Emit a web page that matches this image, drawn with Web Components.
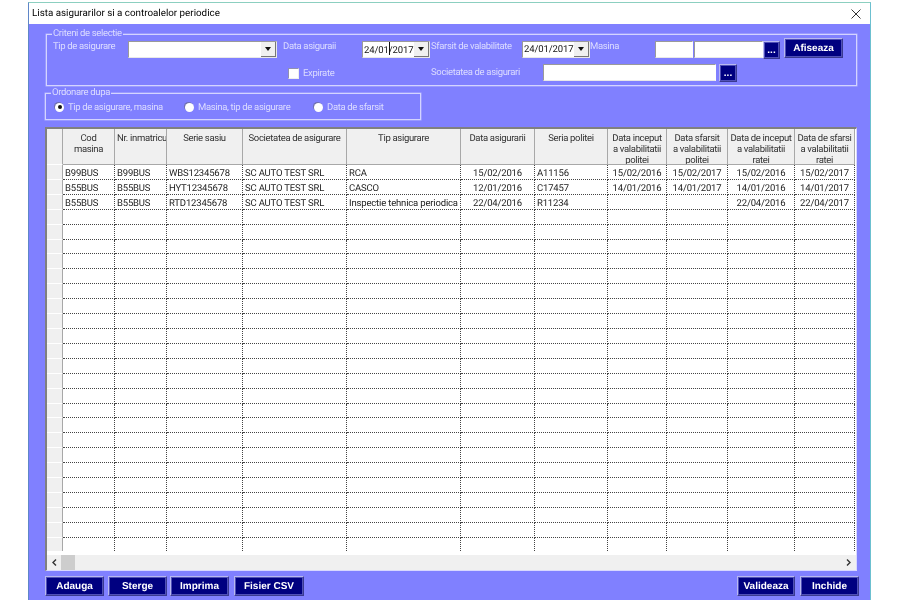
<!DOCTYPE html>
<html>
<head>
<meta charset="utf-8">
<title>Lista asigurarilor</title>
<style>
  html, body { margin: 0; height: 100%; background: #fff; overflow: hidden; }
  body { font: 9.5px Roboto, "Liberation Sans", sans-serif; text-rendering: geometricPrecision; }
</style>
</head>
<body>
<app-window caption="Lista asigurarilor si a controalelor periodice">
  <group-box caption="Criteni de selectie" style="margin-left:1px;width:811px;height:52px">
    <div style="display:flex;flex-direction:column;gap:5px">
      <form-row>
        <form-label width="75">Tip de asigurare</form-label>
        <combo-box width="149"></combo-box>
        <form-label width="79" style="margin-left:6px">Data asiguraii</form-label>
        <combo-box width="68" value="24/01/2017" caret></combo-box>
        <form-label width="91" style="margin-left:1px">Sfarsit de valabilitate</form-label>
        <combo-box width="68" value="24/01/2017"></combo-box>
        <form-label width="65">Masina</form-label>
        <text-box width="38"></text-box>
        <text-box width="69" style="margin-left:1px"></text-box>
        <dark-button width="17" height="18">...</dark-button>
        <dark-button width="59" height="20" style="margin:-3px 0 0 4px">Afiseaza</dark-button>
      </form-row>
      <form-row style="padding-left:235px">
        <check-box width="143">Expirate</check-box>
        <form-label width="112" style="margin-top:3px">Societatea de asigurari</form-label>
        <text-box width="173"></text-box>
        <dark-button width="18" height="18" style="margin-left:3px">...</dark-button>
      </form-row>
    </div>
  </group-box>
  <group-box caption="Ordonare dupa" style="width:376px;height:27px;margin-top:7px">
    <form-row style="padding:1px 0 0 3px">
      <radio-item width="130" checked>Tip de asigurare, masina</radio-item>
      <radio-item width="129">Masina, tip de asigurare</radio-item>
      <radio-item width="80">Data de sfarsit</radio-item>
    </form-row>
  </group-box>
  <data-grid></data-grid>
  <div style="display:flex;margin-top:5px;width:814px">
    <dark-button width="59" height="20">Adauga</dark-button>
    <dark-button width="59" height="20" style="margin-left:4px">Sterge</dark-button>
    <dark-button width="59" height="20" style="margin-left:3px">Imprima</dark-button>
    <dark-button width="70" height="20" style="margin-left:5px">Fisier CSV</dark-button>
    <dark-button width="58" height="20" style="margin-left:auto">Valideaza</dark-button>
    <dark-button width="59" height="20" style="margin-left:5px">Inchide</dark-button>
  </div>
</app-window>

<script>
// Small helper so every element gets an open shadow root with its own style
class Base extends HTMLElement {
  constructor() {
    super();
    this.attachShadow({ mode: 'open' });
  }
  size() {
    const w = this.getAttribute('width');
    const h = this.getAttribute('height');
    if (w) this.style.width = w + 'px';
    if (h) this.style.height = h + 'px';
  }
}

// Main dialog window
class AppWindow extends Base {
  connectedCallback() {
    const caption = this.getAttribute('caption') || '';
    this.shadowRoot.innerHTML = `
      <style>
        :host {
          display: flex;
          flex-direction: column;
          box-sizing: border-box;
          width: 843px;
          height: 598px;
          margin: 2px 0 0 28px;
          border: 1px solid #8ccfc0;
          border-left-color: #5f86c8;
          border-right-color: #6cc0d0;
          border-bottom: 0;
          background: #8080ff;
          filter: blur(.3px);
        }
        .title {
          flex: 0 0 21px;
          display: flex;
          align-items: center;
          justify-content: space-between;
          padding: 0 9px 0 3px;
          background: #fff;
          color: #000;
          font-size: 9.8px;
        }
        .body {
          flex: 1;
          padding: 10px 0 0 16px;
          color: #dcdcff;
          letter-spacing: -.34px;
        }
        svg { display: block; }
      </style>
      <div class="title">
        <span>${caption}</span>
        <svg width="10" height="10" viewBox="0 0 10 10"><path d="M.5 .5l9 9M9.5 .5l-9 9" stroke="#333" fill="none"/></svg>
      </div>
      <div class="body"><slot></slot></div>
    `;
  }
}

// Group frame with a caption sitting on its top line
class GroupBox extends Base {
  connectedCallback() {
    const caption = this.getAttribute('caption') || '';
    this.shadowRoot.innerHTML = `
      <style>
        :host {
          display: block;
          box-sizing: border-box;
          position: relative;
          border: 1px solid #d4d4ff;
          box-shadow: 0 0 0 .5px #b4b4ff;
          padding-top: 6px;
          padding-left: 6px;
        }
        .cap {
          position: absolute;
          left: 5px;
          top: -7px;
          padding: 0 1px;
          background: #8080ff;
          line-height: 12px;
        }
      </style>
      <span class="cap">${caption}</span>
      <slot></slot>
    `;
  }
}

class FormRow extends Base {
  connectedCallback() {
    this.shadowRoot.innerHTML = `
      <style>
        :host { display: flex; align-items: flex-start; }
      </style>
      <slot></slot>
    `;
  }
}

class FormLabel extends Base {
  connectedCallback() {
    this.size();
    this.shadowRoot.innerHTML = `
      <style>
        :host { display: block; flex: none; line-height: 12px; white-space: nowrap; }
      </style>
      <slot></slot>
    `;
  }
}

class TextBox extends Base {
  connectedCallback() {
    this.size();
    this.shadowRoot.innerHTML = `
      <style>
        :host {
          display: block;
          flex: none;
          box-sizing: border-box;
          height: 17px;
          background: #fff;
          border: 1px solid;
          border-color: #9a9a9a #fff #e8e8e8 #9a9a9a;
        }
      </style>
    `;
  }
}

class ComboBox extends Base {
  connectedCallback() {
    this.size();
    const value = this.getAttribute('value') || '';
    const text = this.hasAttribute('caret')
      ? value.slice(0, 5) + '<i></i>' + value.slice(5)
      : value;
    this.shadowRoot.innerHTML = `
      <style>
        :host {
          display: flex;
          flex: none;
          box-sizing: border-box;
          height: 17px;
          background: #fff;
          border: 1px solid;
          border-color: #9a9a9a #e8e8e8 #e8e8e8 #9a9a9a;
          color: #111;
          letter-spacing: -.1px;
        }
        .txt { flex: 1; padding-left: 1px; line-height: 15px; white-space: nowrap; overflow: hidden; }
        i { display: inline-block; width: 1px; height: 13px; margin: 0 -1px 0 0; background: #111; vertical-align: -2px; }
        .btn {
          flex: 0 0 14px;
          display: flex;
          align-items: center;
          justify-content: center;
          background: #f0f0f0;
          border-right: 1px solid #777;
          border-bottom: 1px solid #777;
        }
        .btn::after {
          content: "";
          border: 3.5px solid transparent;
          border-top: 4px solid #111;
          border-bottom: 0;
        }
      </style>
      <span class="txt">${text}</span>
      <span class="btn"></span>
    `;
  }
}

class DarkButton extends Base {
  connectedCallback() {
    this.size();
    this.shadowRoot.innerHTML = `
      <style>
        :host {
          display: flex;
          flex: none;
          align-items: center;
          justify-content: center;
          box-sizing: border-box;
          background: #000080;
          border: 1px solid;
          border-color: #b8b8f0 #3a3a90 #3a3a90 #b8b8f0;
          outline: 1px solid #5050b8;
          outline-offset: -2px;
          color: #fff;
          font: bold 10px "Liberation Sans", sans-serif;
          letter-spacing: 0;
        }
      </style>
      <slot></slot>
    `;
  }
}

class CheckBox extends Base {
  connectedCallback() {
    this.size();
    this.shadowRoot.innerHTML = `
      <style>
        :host { display: flex; flex: none; align-items: center; gap: 4px; height: 12px; margin-top: 3px; }
        b { width: 9px; height: 9px; background: #fff; border: 1px solid; border-color: #9090b0 #eee #eee #9090b0; }
      </style>
      <b></b><slot></slot>
    `;
  }
}

class RadioItem extends Base {
  connectedCallback() {
    this.size();
    const dot = this.hasAttribute('checked') ? '<u></u>' : '';
    this.shadowRoot.innerHTML = `
      <style>
        :host { display: flex; flex: none; align-items: center; gap: 4px; height: 12px; white-space: nowrap; }
        b {
          display: flex;
          flex: none;
          align-items: center;
          justify-content: center;
          width: 9px;
          height: 9px;
          border-radius: 50%;
          background: #fff;
          box-shadow: -1px -1px 0 #7070b0;
        }
        u { width: 4px; height: 4px; border-radius: 50%; background: #111; }
        span { padding-top: 1px; }
      </style>
      <b>${dot}</b><span><slot></slot></span>
    `;
  }
}

// Insurance list grid
const COLUMNS = [
  { w: 52, title: 'Cod<br>masina' },
  { w: 52, title: 'Nr. inmatricu', left: true },
  { w: 76, title: 'Serie sasiu' },
  { w: 104, title: 'Societatea de asigurare' },
  { w: 114, title: 'Tip asigurare' },
  { w: 74, title: 'Data asigurarii', center: true },
  { w: 73, title: 'Seria politei' },
  { w: 59, title: 'Data inceput<br>a valabilitatii<br>politei', center: true },
  { w: 61, title: 'Data sfarsit<br>a valabilitatii<br>politei', center: true },
  { w: 67, title: 'Data de inceput<br>a valabilitatii<br>ratei', center: true },
  { w: 60, title: 'Data de sfarsi<br>a valabilitatii<br>ratei', center: true },
];

const ROWS = [
  ['B99BUS', 'B99BUS', 'WBS12345678', 'SC AUTO TEST SRL', 'RCA', '15/02/2016', 'A11156', '15/02/2016', '15/02/2017', '15/02/2016', '15/02/2017'],
  ['B55BUS', 'B55BUS', 'HYT12345678', 'SC AUTO TEST SRL', 'CASCO', '12/01/2016', 'C17457', '14/01/2016', '14/01/2017', '14/01/2016', '14/01/2017'],
  ['B55BUS', 'B55BUS', 'RTD12345678', 'SC AUTO TEST SRL', 'Inspectie tehnica periodica', '22/04/2016', 'R11234', '', '', '22/04/2016', '22/04/2017'],
];

class DataGrid extends Base {
  connectedCallback() {
    const tracks = COLUMNS.map(c => c.w + 'px').join(' ');
    let cells = '<div class="hd ind"></div>';
    COLUMNS.forEach(c => {
      cells += `<div class="hd${c.left ? ' lft' : ''}">${c.title}</div>`;
    });
    for (let r = 0; r < 26; r++) {
      cells += '<div class="ind"></div>';
      COLUMNS.forEach((c, i) => {
        const val = ROWS[r] ? ROWS[r][i] : '';
        cells += `<div class="td${c.center ? ' ctr' : ''}">${val}</div>`;
      });
    }
    this.shadowRoot.innerHTML = `
      <style>
        :host {
          display: flex;
          flex-direction: column;
          box-sizing: border-box;
          width: 812px;
          height: 444px;
          margin-top: 7px;
          background: #fff;
          border: 1px solid #d8d8ff;
          border-top: 2px solid #808080;
          border-left: 2px solid #808080;
          overflow: hidden;
          color: #222;
        }
        .table {
          flex: 1;
          display: grid;
          grid-template-columns: 16px ${tracks};
          grid-template-rows: 36px repeat(26, 14.92px);
          overflow: hidden;
          min-height: 0;
        }
        .hd {
          box-sizing: border-box;
          background: #f0f0f0;
          border-right: 1px solid #a8a8a8;
          border-bottom: 1px solid #a8a8a8;
          text-align: center;
          padding-top: 4px;
          line-height: 11px;
          color: #333;
          letter-spacing: -.32px;
          overflow: hidden;
          white-space: nowrap;
        }
        .hd.lft { text-align: left; padding-left: 2px; }
        .ind {
          background: #f0f0f0;
          border-right: 1px solid #a8a8a8;
          border-bottom: 1px solid #fff;
        }
        .td {
          box-sizing: border-box;
          border-right: 1px dotted #444;
          border-bottom: 1px dotted #444;
          padding: 3px 0 0 2px;
          line-height: 11px;
          letter-spacing: -.17px;
          white-space: nowrap;
          overflow: hidden;
          color: #222;
        }
        .ctr { text-align: center; padding-left: 0; }
        .scroll {
          flex: 0 0 15px;
          margin-top: 4px;
          display: flex;
          align-items: center;
          justify-content: space-between;
          background: #f0f0f0;
          color: #333;
        }
        .thumb { width: 14px; height: 15px; background: #cdcdcd; margin: 0 auto 0 -1px; }
        svg { display: block; flex: none; margin: 0 5px; }
      </style>
      <div class="table">${cells}</div>
      <div class="scroll">
        <svg width="5" height="7" viewBox="0 0 5 7"><path d="M4 .5L1 3.5L4 6.5" stroke="#333" stroke-width="1.4" fill="none"/></svg>
        <span class="thumb"></span>
        <svg width="5" height="7" viewBox="0 0 5 7"><path d="M1 .5L4 3.5L1 6.5" stroke="#333" stroke-width="1.4" fill="none"/></svg>
      </div>
    `;
  }
}

customElements.define('app-window', AppWindow);
customElements.define('group-box', GroupBox);
customElements.define('form-row', FormRow);
customElements.define('form-label', FormLabel);
customElements.define('text-box', TextBox);
customElements.define('combo-box', ComboBox);
customElements.define('dark-button', DarkButton);
customElements.define('check-box', CheckBox);
customElements.define('radio-item', RadioItem);
customElements.define('data-grid', DataGrid);
</script>
</body>
</html>
